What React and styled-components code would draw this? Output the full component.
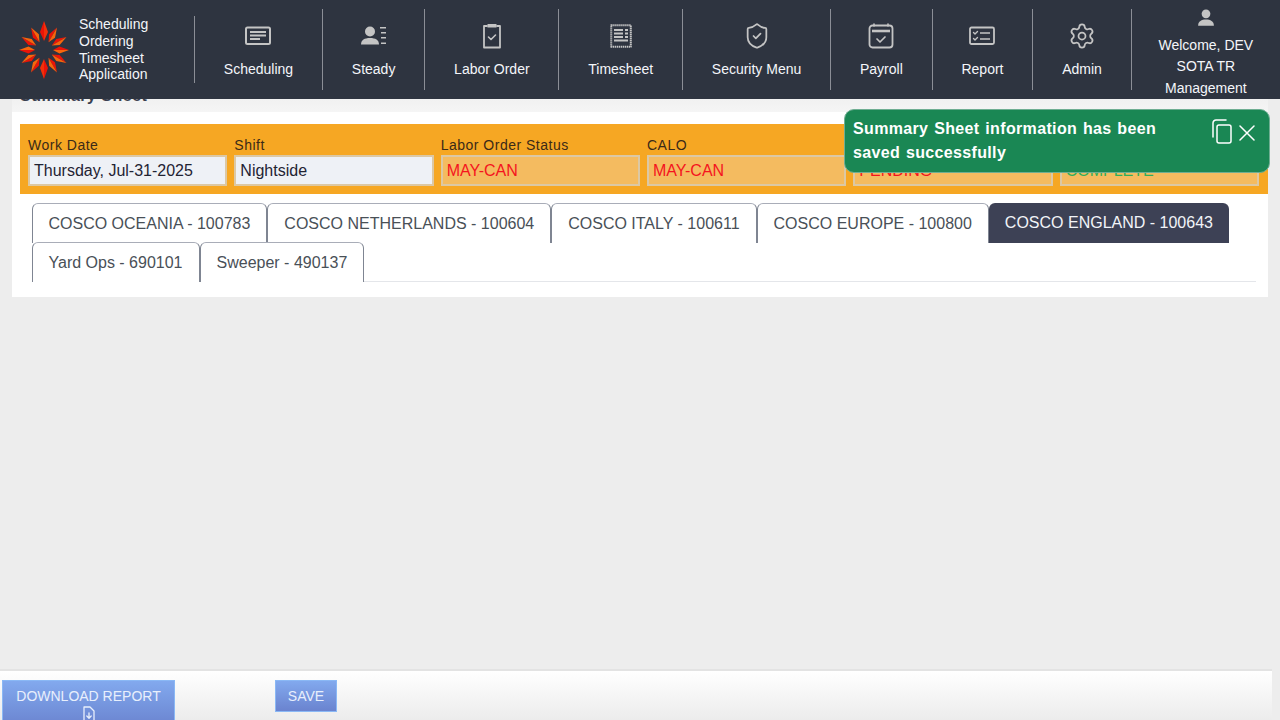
import React from 'react';
import styled, { createGlobalStyle } from 'styled-components';
import { ShieldCheck, Settings } from 'lucide-react';

const GlobalStyle = createGlobalStyle`
  html, body {
    height: 100%;
    margin: 0;
  }
  body {
    background: #ededed;
    font-family: "Liberation Sans", Arial, sans-serif;
    overflow: hidden;
  }
  #root {
    height: 100%;
  }
`;

const Page = styled.div`
  height: 720px;
  display: flex;
  flex-direction: column;
  overflow: hidden;
`;

const Header = styled.header`
  position: relative;
  z-index: 2;
  flex: none;
  height: 99px;
  display: flex;
  align-items: center;
  background: #2e3440;
  color: #f4f6fa;
  font-size: 14px;
`;

const Brand = styled.div`
  width: 195px;
  height: 67px;
  flex: none;
  box-sizing: border-box;
  display: flex;
  align-items: center;
  gap: 10px;
  padding-left: 19px;
  line-height: 16.6px;
  border-right: 1px solid #8b8e96;
`;

const NavItem = styled.div`
  height: 81px;
  box-sizing: border-box;
  flex: none;
  padding: 0 28.85px;
  display: flex;
  flex-direction: column;
  align-items: center;
  border-right: 1px solid #8b8e96;
`;

const IconSlot = styled.div`
  height: 28px;
  margin-top: 13px;
  display: flex;
  align-items: center;
  justify-content: center;
  color: #c4c4c4;
`;

const NavLabel = styled.span`
  margin-top: 11px;
  line-height: 16px;
  white-space: nowrap;
`;

const UserBox = styled.div`
  flex: 1;
  height: 99px;
  display: flex;
  flex-direction: column;
  align-items: center;
  line-height: 21.5px;
  text-align: center;
  svg {
    margin-top: 9px;
    margin-bottom: 8px;
    color: #c4c4c4;
  }
`;

const TitleBand = styled.div`
  margin: -12px 12px 0;
  height: 25px;
  padding-left: 8px;
  background: linear-gradient(#ededed, #f5f5f5);
  color: #3a3f4f;
  font-size: 16px;
  font-weight: bold;
  letter-spacing: 0.5px;
  line-height: 18px;
`;

const Card = styled.section`
  margin: 0 12px;
  height: 185px;
  padding: 12px 0 0 8px;
  box-sizing: border-box;
  background: #fff;
`;

const InfoBar = styled.div`
  height: 70px;
  box-sizing: border-box;
  padding: 11px 9px 0 8px;
  display: grid;
  grid-template-columns: repeat(6, 1fr);
  gap: 7px;
  background: #f6a723;
`;

const Field = styled.div`
  display: flex;
  flex-direction: column;
`;

const FieldLabel = styled.label`
  font-size: 14px;
  line-height: 20px;
  letter-spacing: 0.5px;
  color: #3b2a18;
`;

const FieldValue = styled.div`
  height: 31px;
  box-sizing: border-box;
  padding: 0 4px;
  font-size: 16px;
  line-height: 27px;
  white-space: nowrap;
  border: 2px solid #dcc8a4;
  background: ${p => (p.$locked ? '#f4bb60' : '#eef1f6')};
  color: ${p => p.$color || '#1f2333'};
`;

const TabStrip = styled.div`
  margin: 9px 12px 0 11.5px;
  display: flex;
  flex-wrap: wrap;
  border-bottom: 1px solid #e4e6ea;
`;

const Tab = styled.div`
  height: 40px;
  margin-bottom: -1px;
  box-sizing: border-box;
  padding: 0 16px;
  font-size: 16px;
  line-height: 39px;
  white-space: nowrap;
  border: ${p => (p.$active ? 'none' : '1px solid #7f8592')};
  border-top-color: #a9adb8;
  border-bottom: none;
  border-radius: 6px 6px 0 0;
  background: ${p => (p.$active ? '#3d4155' : '#fff')};
  color: ${p => (p.$active ? '#f2f4f8' : '#495057')};
`;

const Toast = styled.div`
  position: absolute;
  z-index: 3;
  left: 844px;
  top: 109px;
  width: 426px;
  height: 64px;
  box-sizing: border-box;
  padding: 7px 14px 0 8px;
  display: flex;
  justify-content: space-between;
  background: #1a8754;
  border: 1px solid #6fae92;
  border-radius: 10px;
  color: #fff;
  font-size: 16px;
  font-weight: bold;
  line-height: 24px;
  letter-spacing: 0.35px;
  word-spacing: 1px;
`;

const ToastText = styled.div`
  width: 320px;
`;

const ToastActions = styled.div`
  display: flex;
  align-items: flex-start;
  gap: 7px;
  margin-top: 2px;
  svg + svg {
    margin-top: 6px;
  }
`;

const Spacer = styled.div`
  flex: 1;
`;

const Footer = styled.footer`
  flex: none;
  width: 1272px;
  height: 51px;
  box-sizing: border-box;
  padding: 9px 0 0 2px;
  display: flex;
  align-items: flex-start;
  gap: 100px;
  overflow: hidden;
  border-top: 2px solid #e3e3e3;
  background: linear-gradient(#fff, #ececec);
`;

const Button = styled.button`
  box-sizing: border-box;
  width: ${p => p.$width}px;
  min-height: 32px;
  padding: 5px 0;
  display: flex;
  flex-direction: column;
  align-items: center;
  flex: none;
  border: 1px solid #8ab8f5;
  background: linear-gradient(#82a9ee, #6a83cf);
  color: #e8effc;
  font-family: inherit;
  font-size: 14px;
  line-height: 20px;
`;

const Logo = () => {
  const points = [0, 30, 60, 90, 120, 150, 180, 210, 240, 270, 300, 330];
  return (
    <svg width="50" height="60" viewBox="-25 -30 50 60">
      {points.map(a => {
        const vertical = a % 180 === 0;
        const horizontal = a % 180 === 90;
        const r = vertical ? 29 : horizontal ? 25 : 26;
        const w = vertical ? 4 : 3.4;
        const mid = -r * 0.62;
        return (
          <g key={a} transform={`rotate(${a})`}>
            <polygon points={`0,${-r} ${-w},${mid} 0,-9`} fill="#ea1408" />
            <polygon points={`0,${-r} ${w},${mid} 0,-9`} fill={vertical ? '#f3300a' : '#f7660c'} />
          </g>
        );
      })}
    </svg>
  );
};

const icon = { fill: 'none', stroke: 'currentColor', strokeWidth: 2, strokeLinecap: 'round', strokeLinejoin: 'round' };

const SchedulingIcon = () => (
  <svg width="26" height="20" viewBox="0 0 26 20" {...icon}>
    <rect x="1" y="1.5" width="24" height="16.5" rx="1.5" />
    <path d="M5 6h16M5 9.5h16M5 13h10" strokeLinecap="butt" />
  </svg>
);

const SteadyIcon = () => (
  <svg width="26" height="20" viewBox="0 0 26 20">
    <g fill="currentColor">
      <circle cx="9" cy="5.5" r="5" />
      <path d="M0 18.5c0-4.5 3.5-6.5 9-6.5s9 2 9 6.5z" />
      <path d="M19 1h6v1.6h-6zM20 6h5v1.6h-5zM20 11h5v1.6h-5zM20 16.5h5v1.6h-5z" />
    </g>
  </svg>
);

const LaborIcon = () => (
  <svg width="20" height="26" viewBox="0 0 20 26" {...icon}>
    <path d="M5 3H2v21.5h16V3h-3" strokeWidth="1.8" />
    <rect x="5.5" y="1" width="9" height="3.5" fill="currentColor" stroke="none" />
    <path d="M6.5 14l2.5 2.5 4.5-4.5" strokeWidth="1.6" />
  </svg>
);

const TimesheetIcon = () => (
  <svg width="22" height="24" viewBox="0 0 22 24" {...icon}>
    <rect x="1.2" y="1.2" width="19.6" height="21.6" strokeWidth="2" strokeDasharray="1.4 0.6" strokeLinecap="butt" />
    <path d="M4 6h9M4 9.5h9M4 13h9M4 16.5h14M15 6h3M15 9.5h3M15 13h3" strokeLinecap="butt" strokeWidth="1.9" />
  </svg>
);

const PayrollIcon = () => (
  <svg width="26" height="26" viewBox="0 0 26 26" {...icon}>
    <rect x="1.5" y="2.5" width="23" height="22" rx="3" strokeWidth="1.8" />
    <path d="M6 1v2M20 1v2" strokeWidth="1.6" />
    <path d="M4 8h18" strokeWidth="2.6" strokeLinecap="butt" />
    <path d="M9 16l3 3 5-5" strokeWidth="1.7" />
  </svg>
);

const ReportIcon = () => (
  <svg width="26" height="20" viewBox="0 0 26 20" {...icon}>
    <rect x="1" y="1.5" width="24" height="16.5" rx="1.5" strokeWidth="1.8" />
    <path d="M4.5 6.5l1.5 1.5 2.5-2.5M4.5 12.5l1.5 1.5 2.5-2.5" strokeWidth="1.4" />
    <path d="M11 7h10M11 13h10" strokeLinecap="butt" strokeWidth="1.7" />
  </svg>
);

const UserIcon = () => (
  <svg width="20" height="20" viewBox="0 0 20 20" fill="currentColor">
    <circle cx="10" cy="5.5" r="5" />
    <path d="M1 19c0-5 4-7 9-7s9 2 9 7z" />
  </svg>
);

const CopyIcon = () => (
  <svg width="20" height="25" viewBox="0 0 20 25" {...icon} strokeWidth="1.5">
    <rect x="5" y="6" width="14" height="18" rx="2" />
    <path d="M1 18V4a3 3 0 0 1 3-3h10" />
  </svg>
);

const CloseIcon = () => (
  <svg width="16" height="16" viewBox="0 0 16 16" {...icon} strokeWidth="1.5">
    <path d="M1 1l14 14M15 1L1 15" />
  </svg>
);

const FileDownIcon = () => (
  <svg width="14" height="16" viewBox="0 0 14 16" {...icon} strokeWidth="1.3">
    <path d="M2 1h6l4 4v10H2z" />
    <path d="M7 7v5M4.8 10L7 12.2 9.2 10" />
  </svg>
);

const navItems = [
  { label: 'Scheduling', icon: <SchedulingIcon /> },
  { label: 'Steady', icon: <SteadyIcon /> },
  { label: 'Labor Order', icon: <LaborIcon /> },
  { label: 'Timesheet', icon: <TimesheetIcon /> },
  { label: 'Security Menu', icon: <ShieldCheck size={28} strokeWidth={1.5} /> },
  { label: 'Payroll', icon: <PayrollIcon /> },
  { label: 'Report', icon: <ReportIcon /> },
  { label: 'Admin', icon: <Settings size={28} strokeWidth={1.5} /> },
];

const fields = [
  { label: 'Work Date', value: 'Thursday, Jul-31-2025' },
  { label: 'Shift', value: 'Nightside' },
  { label: 'Labor Order Status', value: 'MAY-CAN', locked: true, color: '#f5141e' },
  { label: 'CALO', value: 'MAY-CAN', locked: true, color: '#f5141e' },
  { value: 'PENDING', locked: true, color: '#f5141e' },
  { value: 'COMPLETE', locked: true, color: '#2fae5c' },
];

const tabs = [
  'COSCO OCEANIA - 100783',
  'COSCO NETHERLANDS - 100604',
  'COSCO ITALY - 100611',
  'COSCO EUROPE - 100800',
  'COSCO ENGLAND - 100643',
  'Yard Ops - 690101',
  'Sweeper - 490137',
];

export default function App() {
  return (
    <Page>
      <GlobalStyle />
      <Header>
        <Brand>
          <Logo />
          <div>Scheduling<br />Ordering<br />Timesheet<br />Application</div>
        </Brand>
        {navItems.map(item => (
          <NavItem key={item.label}>
            <IconSlot>{item.icon}</IconSlot>
            <NavLabel>{item.label}</NavLabel>
          </NavItem>
        ))}
        <UserBox>
          <UserIcon />
          <div>Welcome, DEV<br />SOTA TR<br />Management</div>
        </UserBox>
      </Header>
      <TitleBand>Summary Sheet</TitleBand>
      <Card>
        <InfoBar>
          {fields.map(f => (
            <Field key={f.label || f.value}>
              <FieldLabel>{f.label || '\u00a0'}</FieldLabel>
              <FieldValue $locked={f.locked} $color={f.color}>{f.value}</FieldValue>
            </Field>
          ))}
        </InfoBar>
        <TabStrip>
          {tabs.map(t => (
            <Tab key={t} $active={t === 'COSCO ENGLAND - 100643'}>{t}</Tab>
          ))}
        </TabStrip>
      </Card>
      <Toast>
        <ToastText>Summary Sheet information has been saved successfully</ToastText>
        <ToastActions>
          <CopyIcon />
          <CloseIcon />
        </ToastActions>
      </Toast>
      <Spacer />
      <Footer>
        <Button $width={173}>
          DOWNLOAD REPORT
          <FileDownIcon />
        </Button>
        <Button $width={62}>SAVE</Button>
      </Footer>
    </Page>
  );
}
